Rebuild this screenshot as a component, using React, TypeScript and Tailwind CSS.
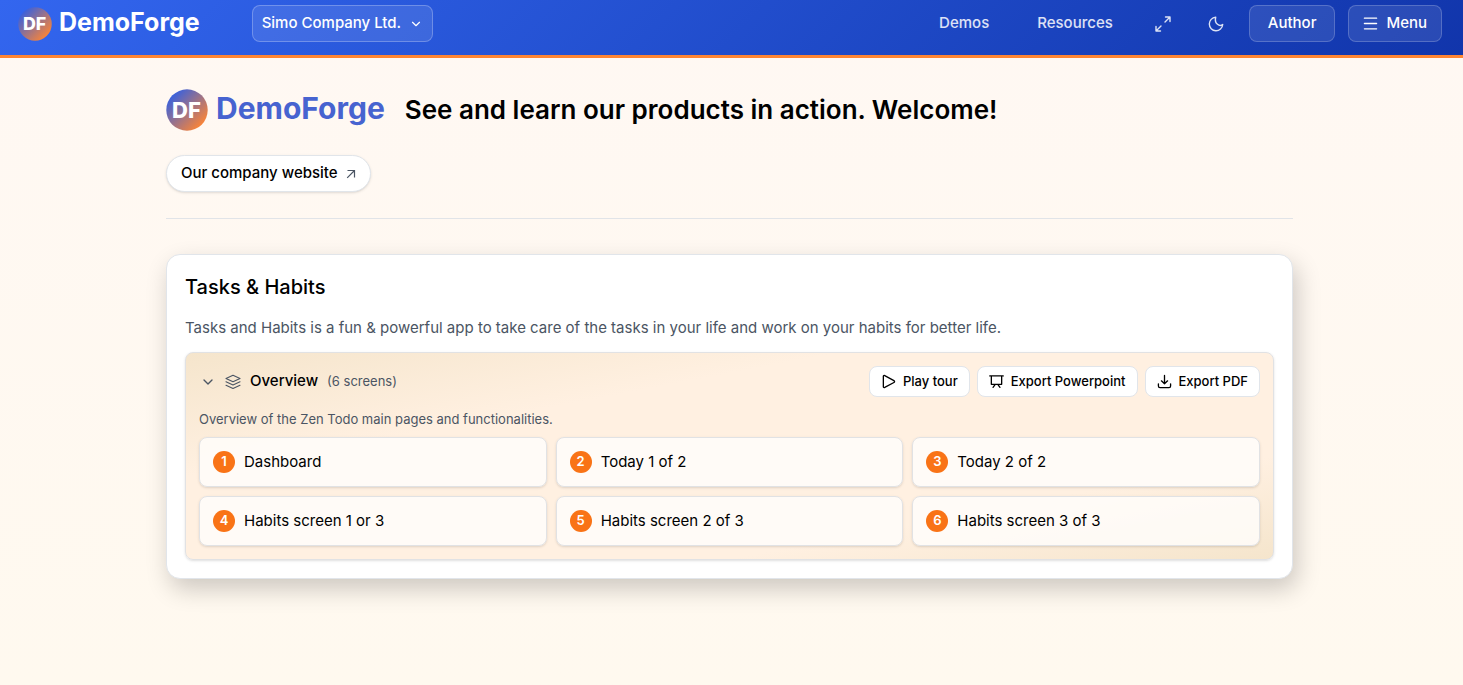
import type { ReactNode } from "react";
import { ChevronDown } from "lucide-react";

const NAV_BUTTON =
  "flex h-[37px] items-center rounded-lg border border-white/20 bg-white/10 text-[15px] font-medium text-white";
const EXPORT_BUTTON =
  "flex h-[31px] items-center gap-[7px] rounded-lg border border-[#e1e5ea] bg-white px-[11px] text-[13px] font-medium text-black";

const screens = [
  "Dashboard",
  "Today 1 of 2",
  "Today 2 of 2",
  "Habits screen 1 or 3",
  "Habits screen 2 of 3",
  "Habits screen 3 of 3",
];

function Icon({ children, className }: { children: ReactNode; className: string }) {
  return (
    <svg
      viewBox="0 0 16 16"
      className={className}
      fill="none"
      stroke="currentColor"
      strokeWidth="1.4"
      strokeLinecap="round"
      strokeLinejoin="round"
      aria-hidden="true"
    >
      {children}
    </svg>
  );
}

function Badge({ id, className }: { id: string; className: string }) {
  return (
    <svg viewBox="0 0 42 42" className={className} aria-hidden="true">
      <defs>
        <linearGradient id={id} x1="0.1" y1="0.1" x2="0.88" y2="0.88">
          <stop offset="0" stopColor="#2f5fe6" />
          <stop offset="1" stopColor="#ff8533" />
        </linearGradient>
      </defs>
      <circle cx="21" cy="21" r="20.7" fill={`url(#${id})`} />
      <text x="20.5" y="29" textAnchor="middle" fill="white" className="font-['Inter',sans-serif] text-[22px] font-extrabold">
        DF
      </text>
    </svg>
  );
}

export default function App() {
  return (
    <div className="min-h-screen bg-linear-to-b from-[#fff8f3] to-[#fff9ef] font-['Inter','Liberation_Sans',sans-serif] text-black">
      <header className="flex h-[58px] items-start justify-between border-b-3 border-[#ff8533] bg-linear-135 from-[#3366ef] to-[#1135ab] pr-[21px] pl-[18px]">
        <div className="flex items-start gap-[52px]">
          <a href="#home" className="mt-[7px] flex items-center gap-[7px] text-white">
            <Badge id="nav-badge" className="size-[34px]" />
            <span className="mb-1 text-[25px] leading-[30px] font-bold">DemoForge</span>
          </a>
          <button type="button" className="mt-[5px] flex h-[37px] items-center gap-2 rounded-lg border border-white/25 bg-white/10 px-[9px] text-[15px] font-medium text-white">
            Simo Company Ltd.
            <ChevronDown className="size-[14px]" />
          </button>
        </div>
        <nav className="mt-[5px] flex h-[37px] items-center text-[15px] font-medium text-white/85">
          <a href="#demos">Demos</a>
          <a href="#resources" className="ml-12">Resources</a>
          <button type="button" aria-label="Full screen" className="ml-[42px]">
            <Icon className="size-4">
              <path d="M10.500 1H15v4.500M15 1l-5 5M5.500 15H1v-4.500M1 15l5-5" />
            </Icon>
          </button>
          <button type="button" aria-label="Dark mode" className="ml-[37px]">
            <Icon className="size-4">
              <path d="M7.700 1.300a6.700 6.700 0 1 0 7 7.200c-1.300 1-3.600 1.100-5.200-.2c-1.900-1.500-2.400-4.500-1.800-7z" />
            </Icon>
          </button>
          <button type="button" className={`${NAV_BUTTON} ml-[25px] px-[18px]`}>Author</button>
          <button type="button" className={`${NAV_BUTTON} ml-[13px] gap-2 px-[14px]`}>
            <Icon className="size-[15px]">
              <path d="M1.500 2.300h13M1.500 8h13M1.500 13.700h13" />
            </Icon>
            Menu
          </button>
        </nav>
      </header>

      <main className="mx-auto w-full max-w-[1131px] pt-[31px] pr-1">
        <div className="flex items-center gap-5">
          <div className="flex items-center gap-2">
            <Badge id="hero-badge" className="size-[42px]" />
            <span className="mb-1 text-[30px] leading-9 font-bold text-[#4763d0]">DemoForge</span>
          </div>
          <h1 className="text-[26px] leading-8 font-semibold">See and learn our products in action. Welcome!</h1>
        </div>
        <a href="#company" className="mt-6 inline-flex h-[37px] items-center gap-2 rounded-full border border-[#e1e5ea] bg-white px-[14px] text-[15px] font-medium shadow-sm">
          Our company website
          <svg viewBox="0 0 10 10" className="size-[10px] text-[#4b5563]" fill="none" stroke="currentColor" strokeWidth="1.2" aria-hidden="true">
            <path d="M1.500 1.500h7v7M8.500 1.500L1.200 8.800" />
          </svg>
        </a>
        <hr className="mt-[26px] border-[#e1e4e8]" />

        <section className="mt-[35px] rounded-[14px] border border-[#e1e5ea] bg-white px-[18px] pt-[18px] pb-[18px] shadow-[4px_10px_24px_rgba(0,0,0,0.2)]">
          <h2 className="text-[20px] leading-7 font-medium">Tasks &amp; Habits</h2>
          <p className="mt-[15px] text-[15px] leading-6 text-[#4b5563]">
            Tasks and Habits is a fun &amp; powerful app to take care of the tasks in your life and work on your habits for better life.
          </p>
          <div className="mt-3 rounded-lg border border-[#e1e2e4] bg-[linear-gradient(to_bottom_right,#f5e5cc,#fff0e1_30%,#fff0e1_75%,#f5e5cc)] p-[13px] shadow-sm">
            <div className="flex items-center justify-between">
              <h3 className="flex items-center text-[15px] font-medium">
                <button type="button" aria-label="Collapse overview" className="ml-px">
                  <ChevronDown className="size-4 text-[#4b5563]" />
                </button>
                <Icon className="ml-[9px] size-4 text-[#4b5563]">
                  <path strokeWidth="1.1" d="M8 1.200l7 3.300L8 7.800L1 4.500zM1 7.700L8 11l7-3.300M1 11.200l7 3.300l7-3.300" />
                </Icon>
                <span className="ml-[9px]">Overview</span>
                <span className="ml-[9px] text-[13px] font-normal text-[#4b5563]">(6 screens)</span>
              </h3>
              <div className="flex gap-[7px]">
                <button type="button" className={EXPORT_BUTTON}>
                  <Icon className="size-[15px]">
                    <path d="M2.500 2.500v11c0 .9.700 1.200 1.500.8l9.800-5.200c.9-.5.900-1.600 0-2.100L4 1.700c-.8-.4-1.500-.1-1.500.8z" />
                  </Icon>
                  Play tour
                </button>
                <button type="button" className={EXPORT_BUTTON}>
                  <Icon className="size-[15px]">
                    <path d="M.8 2h14.400M2.500 2v9h11V2M6.300 11.500l-2 2.700M9.700 11.500l2 2.700" />
                  </Icon>
                  Export Powerpoint
                </button>
                <button type="button" className={EXPORT_BUTTON}>
                  <Icon className="size-[15px]">
                    <path d="M8 1.500v9M4.700 7.300L8 10.500l3.300-3.200M1.500 10.500v2.300c0 .9.700 1.700 1.700 1.700h9.600c1 0 1.700-.8 1.700-1.700v-2.300" />
                  </Icon>
                  Export PDF
                </button>
              </div>
            </div>
            <p className="mt-3 text-[13px] leading-5 text-[#4b5563]">Overview of the Zen Todo main pages and functionalities.</p>
            <ol className="mt-2 grid grid-cols-3 gap-[9px]">
              {screens.map((name, i) => (
                <li key={name} className="flex h-[50px] items-center gap-[9px] rounded-lg border border-[#e1e2e4] bg-[#fffefc]/80 px-[13px] text-[15px] shadow-sm">
                  <span className="flex size-[22px] items-center justify-center rounded-full bg-[#f97316] text-[13px] font-semibold text-white">{i + 1}</span>
                  {name}
                </li>
              ))}
            </ol>
          </div>
        </section>
      </main>
    </div>
  );
}
